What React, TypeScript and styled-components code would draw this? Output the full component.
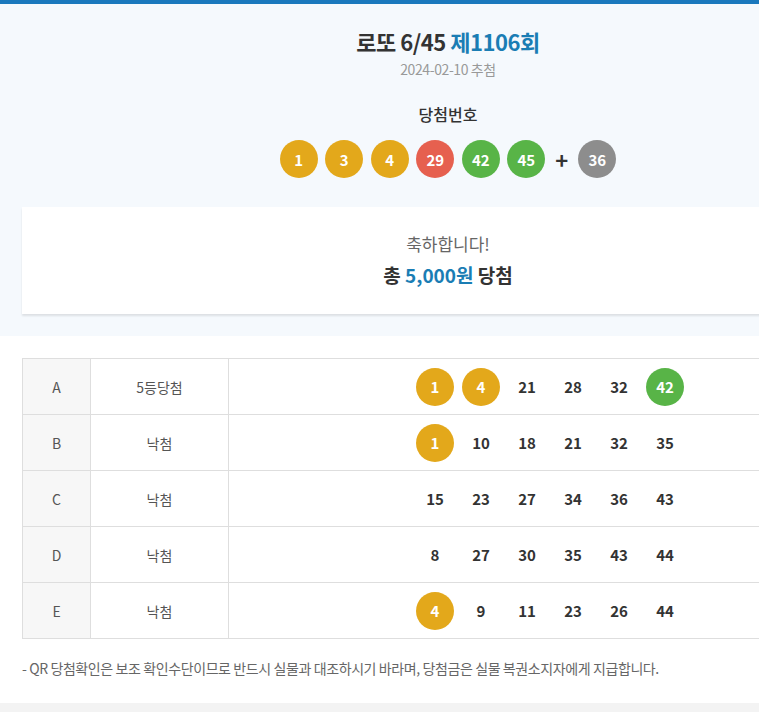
import React from "react";
import styled, { createGlobalStyle } from "styled-components";

const GlobalStyle = createGlobalStyle`
  html, body {
    margin: 0;
    padding: 0;
    overflow-x: hidden;
    background: #ffffff;
  }
  body {
    font-family: "Noto Sans CJK KR", "Noto Sans", sans-serif;
    color: #333;
  }
`;

type BallColor = "yellow" | "red" | "green" | "gray" | "none";

const ballBg: Record<BallColor, string> = {
  yellow: "#e3a81b",
  red: "#e6604f",
  green: "#58b447",
  gray: "#8d8d8d",
  none: "transparent",
};

const colorFor = (n: number): BallColor => {
  if (n <= 20) return "yellow";
  if (n <= 30) return "red";
  if (n <= 40) return "gray";
  return "green";
};

const Page = styled.div`
  width: 896px;
  border-top: 4px solid #1a78bd;
`;

const TopSection = styled.section`
  background: #f5f9fd;
  padding: 22px 22px 22px;
  display: flex;
  flex-direction: column;
  align-items: center;
`;

const Title = styled.h1`
  margin: 0;
  font-size: 22px;
  line-height: 30px;
  font-weight: 700;
  color: #333;
  letter-spacing: -0.5px;
`;

const Accent = styled.span`
  color: #1a7db4;
`;

const DateText = styled.div`
  margin-top: 3px;
  font-size: 14px;
  line-height: 20px;
  color: #999;
  letter-spacing: -0.4px;
`;

const SubTitle = styled.h2`
  margin: 23px 0 0;
  font-size: 16px;
  line-height: 24px;
  font-weight: 500;
  color: #333;
`;

const BallRow = styled.div`
  margin-top: 14px;
  display: flex;
  align-items: center;
  gap: 7.5px;
`;

const Ball = styled.span<{ $color: BallColor }>`
  width: 38px;
  height: 38px;
  border-radius: 50%;
  background: ${(p) => ballBg[p.$color]};
  color: ${(p) => (p.$color === "none" ? "#333" : "#fff")};
  display: flex;
  align-items: center;
  justify-content: center;
  font-size: 15px;
  font-weight: 700;
  flex: none;
`;

const Plus = styled.span`
  width: 18px;
  text-align: center;
  font-size: 22px;
  font-weight: 700;
  color: #333;
  line-height: 38px;
`;

const Card = styled.div`
  margin-top: 29px;
  align-self: stretch;
  background: #fff;
  box-shadow: 0 2px 2px rgba(0, 0, 0, 0.1);
  padding: 24px 0 25px;
  display: flex;
  flex-direction: column;
  align-items: center;
  gap: 4px;
`;

const Congrats = styled.div`
  font-size: 17px;
  line-height: 26px;
  color: #666;
`;

const Prize = styled.div`
  font-size: 19px;
  line-height: 28px;
  font-weight: 700;
  color: #333;
`;

const TableSection = styled.section`
  padding: 22px 22px 25px;
`;

const Table = styled.div`
  border-top: 1px solid #dedede;
  border-left: 1px solid #dedede;
`;

const Row = styled.div`
  display: grid;
  grid-template-columns: 68px 138px 1fr;
  height: 56px;
`;

const Cell = styled.div<{ $head?: boolean }>`
  border-right: 1px solid #dedede;
  border-bottom: 1px solid #dedede;
  background: ${(p) => (p.$head ? "#f7f7f7" : "#fff")};
  display: flex;
  align-items: center;
  justify-content: center;
  font-size: 14px;
  color: #555;
`;

const Numbers = styled.div`
  display: flex;
  gap: 8px;
  margin-left: -2px;
`;

const Note = styled.p`
  margin: 19px 0 0;
  font-size: 14px;
  line-height: 20px;
  color: #666;
  letter-spacing: -0.4px;
`;

const Footer = styled.div`
  height: 20px;
  background: #f3f3f3;
`;

const winning = [1, 3, 4, 29, 42, 45];
const bonus = 36;

const rows: { label: string; result: string; nums: number[] }[] = [
  { label: "A", result: "5등당첨", nums: [1, 4, 21, 28, 32, 42] },
  { label: "B", result: "낙첨", nums: [1, 10, 18, 21, 32, 35] },
  { label: "C", result: "낙첨", nums: [15, 23, 27, 34, 36, 43] },
  { label: "D", result: "낙첨", nums: [8, 27, 30, 35, 43, 44] },
  { label: "E", result: "낙첨", nums: [4, 9, 11, 23, 26, 44] },
];

export default function App() {
  return (
    <>
      <GlobalStyle />
      <Page>
        <TopSection>
          <Title>
            로또 6/45 <Accent>제1106회</Accent>
          </Title>
          <DateText>2024-02-10 추첨</DateText>
          <SubTitle>당첨번호</SubTitle>
          <BallRow>
            {winning.map((n) => (
              <Ball key={n} $color={colorFor(n)}>
                {n}
              </Ball>
            ))}
            <Plus>+</Plus>
            <Ball $color="gray">{bonus}</Ball>
          </BallRow>
          <Card>
            <Congrats>축하합니다!</Congrats>
            <Prize>
              총 <Accent>5,000원</Accent> 당첨
            </Prize>
          </Card>
        </TopSection>
        <TableSection>
          <Table>
            {rows.map((r) => (
              <Row key={r.label}>
                <Cell $head>{r.label}</Cell>
                <Cell>{r.result}</Cell>
                <Cell>
                  <Numbers>
                    {r.nums.map((n) => (
                      <Ball
                        key={n}
                        $color={winning.includes(n) ? colorFor(n) : "none"}
                      >
                        {n}
                      </Ball>
                    ))}
                  </Numbers>
                </Cell>
              </Row>
            ))}
          </Table>
          <Note>
            - QR 당첨확인은 보조 확인수단이므로 반드시 실물과 대조하시기 바라며, 당첨금은 실물 복권소지자에게 지급합니다.
          </Note>
        </TableSection>
        <Footer />
      </Page>
    </>
  );
}
